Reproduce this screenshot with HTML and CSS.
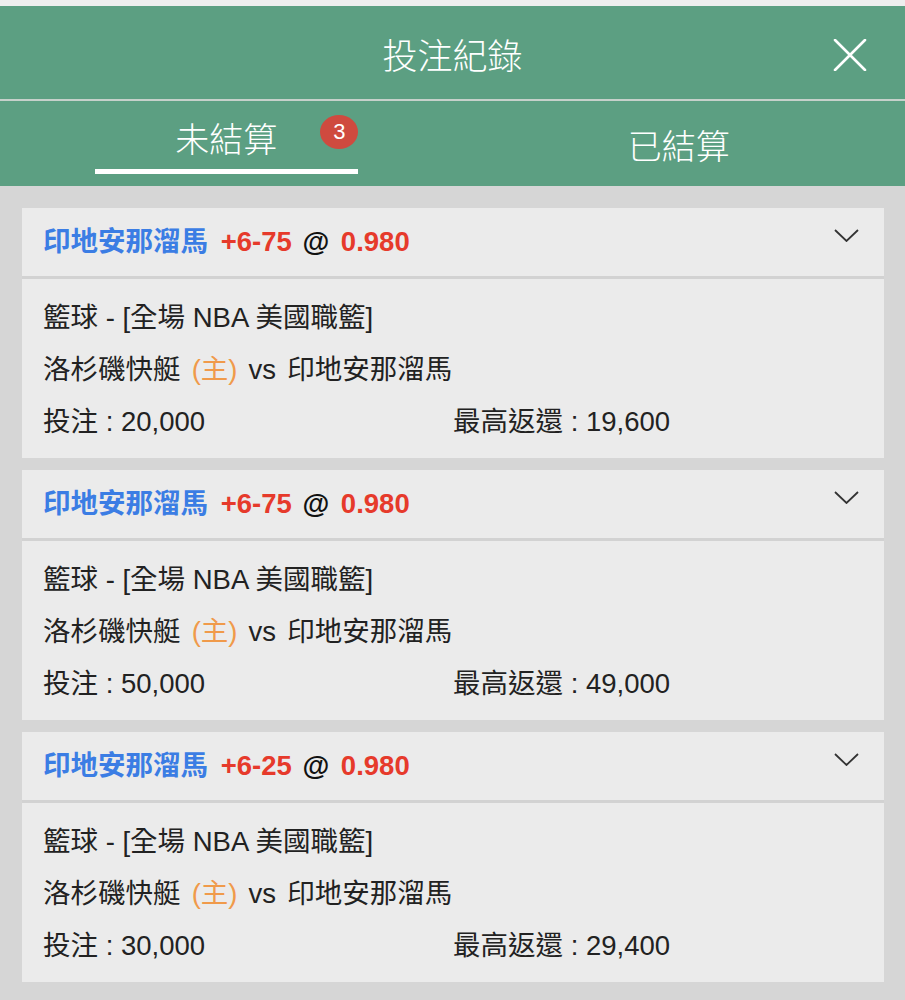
FILE: index.html
```html
<!DOCTYPE html>
<html lang="zh-Hant">
<head>
  <meta charset="UTF-8">
  <title>投注紀錄</title>
  <meta name="viewport" content="width=device-width, initial-scale=1.0">
  <link rel="stylesheet" href="styles.css">
</head>
<body>
  <div class="top-strip"></div>

  <header class="app-header">
    <span></span>
    <h1>投注紀錄</h1>
    <button class="close-btn" aria-label="關閉">
      <svg width="34" height="32" viewBox="0 0 34 32">
        <path d="M2 1 L32 31 M32 1 L2 31" stroke="#fff" stroke-width="2.6" stroke-linecap="round" fill="none"/>
      </svg>
    </button>
  </header>

  <nav class="tabs">
    <div class="tab active">
      <span class="tab-label">未結算<span class="badge">3</span></span>
      <span class="tab-line"></span>
    </div>
    <div class="tab">
      <span class="tab-label">已結算</span>
    </div>
  </nav>

  <main class="bet-list">
    <section class="bet-card">
      <div class="bet-head">
        <p class="bet-title">
          <span class="team">印地安那溜馬</span>
          <span class="odds">+6-75</span>
          <span class="at">@</span>
          <span class="odds">0.980</span>
        </p>
        <svg class="chevron" width="25" height="13" viewBox="0 0 25 13">
          <path d="M1 1 L12.5 12 L24 1" stroke="#333" stroke-width="1.8" fill="none"/>
        </svg>
      </div>
      <div class="bet-body">
        <p class="line">籃球 - [全場 NBA 美國職籃]</p>
        <p class="line match">洛杉磯快艇 <span class="home">(主)</span> vs 印地安那溜馬</p>
        <div class="line amounts">
          <span>投注 : 20,000</span>
          <span>最高返還 : 19,600</span>
        </div>
      </div>
    </section>

    <section class="bet-card">
      <div class="bet-head">
        <p class="bet-title">
          <span class="team">印地安那溜馬</span>
          <span class="odds">+6-75</span>
          <span class="at">@</span>
          <span class="odds">0.980</span>
        </p>
        <svg class="chevron" width="25" height="13" viewBox="0 0 25 13">
          <path d="M1 1 L12.5 12 L24 1" stroke="#333" stroke-width="1.8" fill="none"/>
        </svg>
      </div>
      <div class="bet-body">
        <p class="line">籃球 - [全場 NBA 美國職籃]</p>
        <p class="line match">洛杉磯快艇 <span class="home">(主)</span> vs 印地安那溜馬</p>
        <div class="line amounts">
          <span>投注 : 50,000</span>
          <span>最高返還 : 49,000</span>
        </div>
      </div>
    </section>

    <section class="bet-card">
      <div class="bet-head">
        <p class="bet-title">
          <span class="team">印地安那溜馬</span>
          <span class="odds">+6-25</span>
          <span class="at">@</span>
          <span class="odds">0.980</span>
        </p>
        <svg class="chevron" width="25" height="13" viewBox="0 0 25 13">
          <path d="M1 1 L12.5 12 L24 1" stroke="#333" stroke-width="1.8" fill="none"/>
        </svg>
      </div>
      <div class="bet-body">
        <p class="line">籃球 - [全場 NBA 美國職籃]</p>
        <p class="line match">洛杉磯快艇 <span class="home">(主)</span> vs 印地安那溜馬</p>
        <div class="line amounts">
          <span>投注 : 30,000</span>
          <span>最高返還 : 29,400</span>
        </div>
      </div>
    </section>
  </main>
</body>
</html>
```

FILE: styles.css
```css
/* Colours */
:root {
  --green: #5c9f82;
  --page-bg: #d6d6d6;
  --card-bg: #ebebeb;
  --divider: #d2d2d2;
  --text: #222222;
  --blue: #3b7de4;
  --red: #e63a2b;
  --orange: #f09a4a;
  --badge: #cf4a3f;
}

* {
  margin: 0;
  padding: 0;
  box-sizing: border-box;
}

body {
  background-color: var(--page-bg);
  color: var(--text);
  font-family: "Liberation Sans", "Noto Sans CJK TC", sans-serif;
  min-height: 1000px;
}

.top-strip {
  height: 6px;
  background-color: #eeeeee;
}

/* Header with title and close button */
.app-header {
  display: grid;
  grid-template-columns: 1fr auto 1fr;
  align-items: center;
  height: 95px;
  background-color: var(--green);
  border-bottom: 2px solid #c6d1cb;
}

.app-header h1 {
  color: #fff;
  font-family: "Noto Sans CJK TC", sans-serif;
  font-size: 35px;
  font-weight: 300;
  line-height: 40px;
  margin-top: 2px;
}

.close-btn {
  justify-self: end;
  margin-right: 38px;
  margin-top: 4px;
  width: 34px;
  height: 32px;
  border: none;
  background: none;
  display: flex;
}

/* Tabs */
.tabs {
  display: flex;
  height: 85px;
  background-color: var(--green);
}

.tab {
  flex: 1;
  display: flex;
  flex-direction: column;
  align-items: center;
  padding-top: 24px;
}

.tab.active {
  padding-top: 17px;
}

.tab-label {
  position: relative;
  color: #fff;
  font-family: "Noto Sans CJK TC", sans-serif;
  font-size: 34px;
  font-weight: 300;
  line-height: 40px;
}

.badge {
  position: absolute;
  left: 145px;
  top: -3px;
  width: 38px;
  height: 34px;
  border-radius: 50%;
  background-color: var(--badge);
  color: #fff;
  font-family: "Liberation Sans", sans-serif;
  font-size: 22px;
  line-height: 34px;
  text-align: center;
}

.tab-line {
  width: 263px;
  height: 5px;
  margin-top: 11px;
  background-color: #fff;
}

/* Bet cards */
.bet-list {
  display: flex;
  flex-direction: column;
  gap: 12px;
  padding: 22px 21px 0 22px;
}

.bet-card {
  background-color: var(--card-bg);
}

.bet-head {
  display: flex;
  justify-content: space-between;
  align-items: flex-start;
  height: 71px;
  padding: 0 25px 0 21px;
  border-bottom: 3px solid var(--divider);
}

.bet-title {
  font-size: 27.5px;
  font-weight: bold;
  line-height: 68px;
}

.bet-title .team {
  color: var(--blue);
  margin-right: 5px;
}

.bet-title .odds {
  color: var(--red);
}

.bet-title .at {
  color: #111;
  margin: 0 4px 0 3px;
}

.chevron {
  margin-top: 21px;
}

.bet-body {
  padding: 13px 21px 10px;
  font-size: 27.5px;
}

.line {
  height: 52px;
  line-height: 52px;
  white-space: nowrap;
}

.match {
  word-spacing: 3.5px;
}

.home {
  color: var(--orange);
}

.amounts {
  display: grid;
  grid-template-columns: 410px 1fr;
}
```
